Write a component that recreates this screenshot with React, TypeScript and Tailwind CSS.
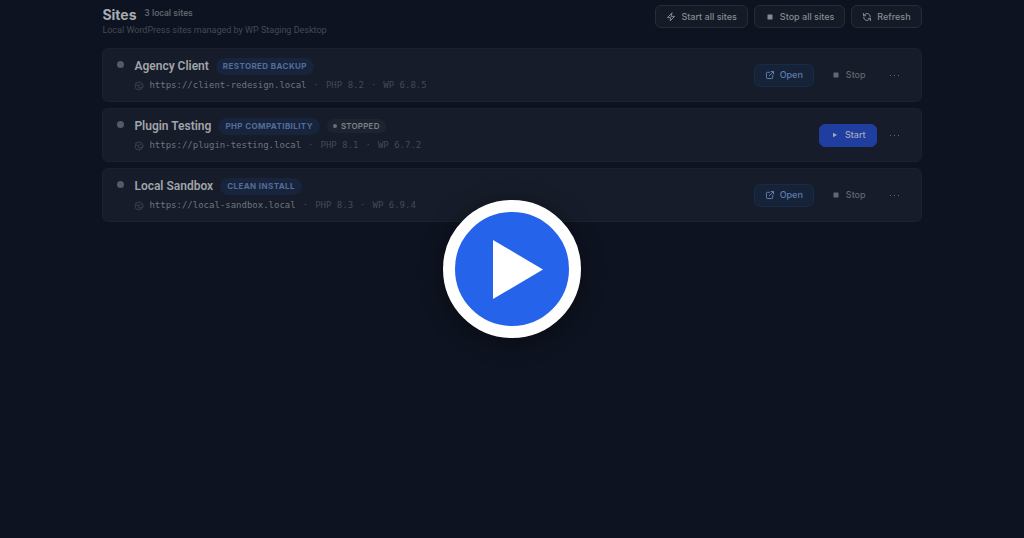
import type { ReactNode } from 'react';
import clsx from 'clsx';

type Site = {
  name: string;
  label: string;
  url: string;
  php: string;
  wp: string;
  running: boolean;
};

const sites: Site[] = [
  { name: 'Agency Client', label: 'Restored backup', url: 'https://client-redesign.local', php: 'PHP 8.2', wp: 'WP 6.8.5', running: true },
  { name: 'Plugin Testing', label: 'PHP compatibility', url: 'https://plugin-testing.local', php: 'PHP 8.1', wp: 'WP 6.7.2', running: false },
  { name: 'Local Sandbox', label: 'Clean install', url: 'https://local-sandbox.local', php: 'PHP 8.3', wp: 'WP 6.9.4', running: true },
];

const iconProps = {
  viewBox: '0 0 24 24',
  fill: 'none',
  stroke: 'currentColor',
  strokeWidth: 2.4,
  strokeLinecap: 'round' as const,
  strokeLinejoin: 'round' as const,
  'aria-hidden': true,
};

function BoltIcon() {
  return (
    <svg {...iconProps} className="size-[10px]">
      <path d="M14 2.500 3.500 13.500H11L10 21.500l10.500-11H13z" />
    </svg>
  );
}

function RefreshIcon() {
  return (
    <svg {...iconProps} className="size-[10px]">
      <path d="M20 11a8 8 0 0 0-14-4.500L3.500 9" />
      <path d="M3.500 3.500V9H9" />
      <path d="M4 13a8 8 0 0 0 14 4.500l2.500-2.500" />
      <path d="M20.500 20.500V15H15" />
    </svg>
  );
}

function OpenIcon() {
  return (
    <svg {...iconProps} className="size-[10px]">
      <path d="M14.500 3.500h6v6" />
      <path d="M10 14 20.500 3.500" />
      <path d="M18.500 13v5.500a2 2 0 0 1-2 2h-11a2 2 0 0 1-2-2v-11a2 2 0 0 1 2-2H11" />
    </svg>
  );
}

function GlobeIcon() {
  return (
    <svg {...iconProps} className="size-[10px] shrink-0 text-[#39404b]">
      <circle cx="12" cy="12" r="9.5" />
      <path d="M4 7.500 10 12l3 5" />
      <path d="M10 12 18 6.500" />
      <path d="m13 17 7-2" />
    </svg>
  );
}

function StopIcon() {
  return (
    <svg viewBox="0 0 10 10" fill="currentColor" aria-hidden="true" className="size-[10px]">
      <rect x="2.5" y="2.5" width="5" height="5" rx="0.5" />
    </svg>
  );
}

function StartIcon() {
  return (
    <svg viewBox="0 0 10 10" fill="currentColor" aria-hidden="true" className="size-[10px]">
      <path d="M3 2.800v4.400L7 5z" />
    </svg>
  );
}

function Button({ className, children }: { className?: string; children: ReactNode }) {
  return (
    <button
      type="button"
      className={clsx("flex h-[23px] items-center gap-[5px] rounded-md border px-[10px] font-['Inter',sans-serif] text-[9px] font-medium whitespace-nowrap", className)}
    >
      {children}
    </button>
  );
}

function SiteCard({ site }: { site: Site }) {
  return (
    <li className="flex items-center justify-between rounded-md border border-[#1b212d] bg-[#161c29] px-[14px] py-2">
      <div className="flex gap-[10px]">
        <span className="mt-1 size-[7px] shrink-0 rounded-full bg-[#545c63]" />
        <div>
          <div className="flex h-[18px] items-center gap-[7px]">
            <h2 className="text-[12px] font-semibold text-[#a2a5aa]">{site.name}</h2>
            <span className="flex h-[17px] items-center rounded-full bg-[#18243b] px-[7px] font-['Inter',sans-serif] text-[8px] font-bold tracking-wider text-[#526d9c] uppercase">
              {site.label}
            </span>
            {!site.running && (
              <span className="flex h-[14px] items-center gap-1 rounded-full bg-[#1e242f] px-[6px] font-['Inter',sans-serif] text-[8px] font-semibold tracking-wide text-[#7d8188] uppercase">
                <span className="size-1 rounded-full bg-[#6b7077]" />
                Stopped
              </span>
            )}
          </div>
          <div className="mt-1 flex h-[14px] items-center gap-[7px] font-['DejaVu_Sans_Mono',monospace] text-[9px] text-[#444a54]">
            <a href={site.url} className="flex items-center gap-[5px] text-[#70757e]">
              <GlobeIcon />
              {site.url}
            </a>
            <span>·</span>
            <span>{site.php}</span>
            <span>·</span>
            <span>{site.wp}</span>
          </div>
        </div>
      </div>

      <div className="flex items-center gap-[6px]">
        {site.running ? (
          <>
            <Button className="border-[#1a2a45] bg-[#152238] text-[#5f7fae]">
              <OpenIcon />
              Open
            </Button>
            <Button className="border-transparent text-[#626770]">
              <StopIcon />
              Stop
            </Button>
          </>
        ) : (
          <Button className="border-[#203da0] bg-[#203da0] text-[#a3a9bb]">
            <StartIcon />
            Start
          </Button>
        )}
        <button type="button" aria-label={`More actions for ${site.name}`} className="flex h-[23px] w-6 items-center justify-center gap-[3px]">
          <span className="size-px bg-[#626770]" />
          <span className="size-px bg-[#626770]" />
          <span className="size-px bg-[#626770]" />
        </button>
      </div>
    </li>
  );
}

export default function App() {
  return (
    <div className="relative min-h-screen bg-[#0d1320] px-[10%] pt-[5px] font-['Roboto',sans-serif]">
      <header className="flex items-start justify-between">
        <div>
          <div className="flex h-[18px] items-center gap-2">
            <h1 className="font-['Inter',sans-serif] text-[14px] font-bold text-[#a9acb1]">Sites</h1>
            <span className="text-[9px] font-medium text-[#62676f]">3 local sites</span>
          </div>
          <p className="text-[9px] leading-[14px] text-[#444a54]">Local WordPress sites managed by WP Staging Desktop</p>
        </div>
        <div className="flex gap-[6px]">
          <Button className="border-[#272d38] bg-[#141a26] text-[#868a91]">
            <BoltIcon />
            Start all sites
          </Button>
          <Button className="border-[#272d38] bg-[#141a26] text-[#868a91]">
            <StopIcon />
            Stop all sites
          </Button>
          <Button className="border-[#272d38] bg-[#141a26] text-[#868a91]">
            <RefreshIcon />
            Refresh
          </Button>
        </div>
      </header>

      <ul className="mt-[11px] space-y-[6px]">
        {sites.map(site => (
          <SiteCard key={site.name} site={site} />
        ))}
      </ul>

      {/* Video play overlay */}
      <div className="absolute inset-0 flex items-center justify-center">
        <button
          type="button"
          aria-label="Play video"
          className="flex size-[138px] items-center justify-center rounded-full border-12 border-white bg-[#2563eb] shadow-[0_4px_24px_rgba(0,0,0,0.4)]"
        >
          <svg viewBox="0 0 114 114" fill="white" aria-hidden="true" className="size-[114px]">
            <path d="M38 28v59l50-29.500z" />
          </svg>
        </button>
      </div>
    </div>
  );
}
